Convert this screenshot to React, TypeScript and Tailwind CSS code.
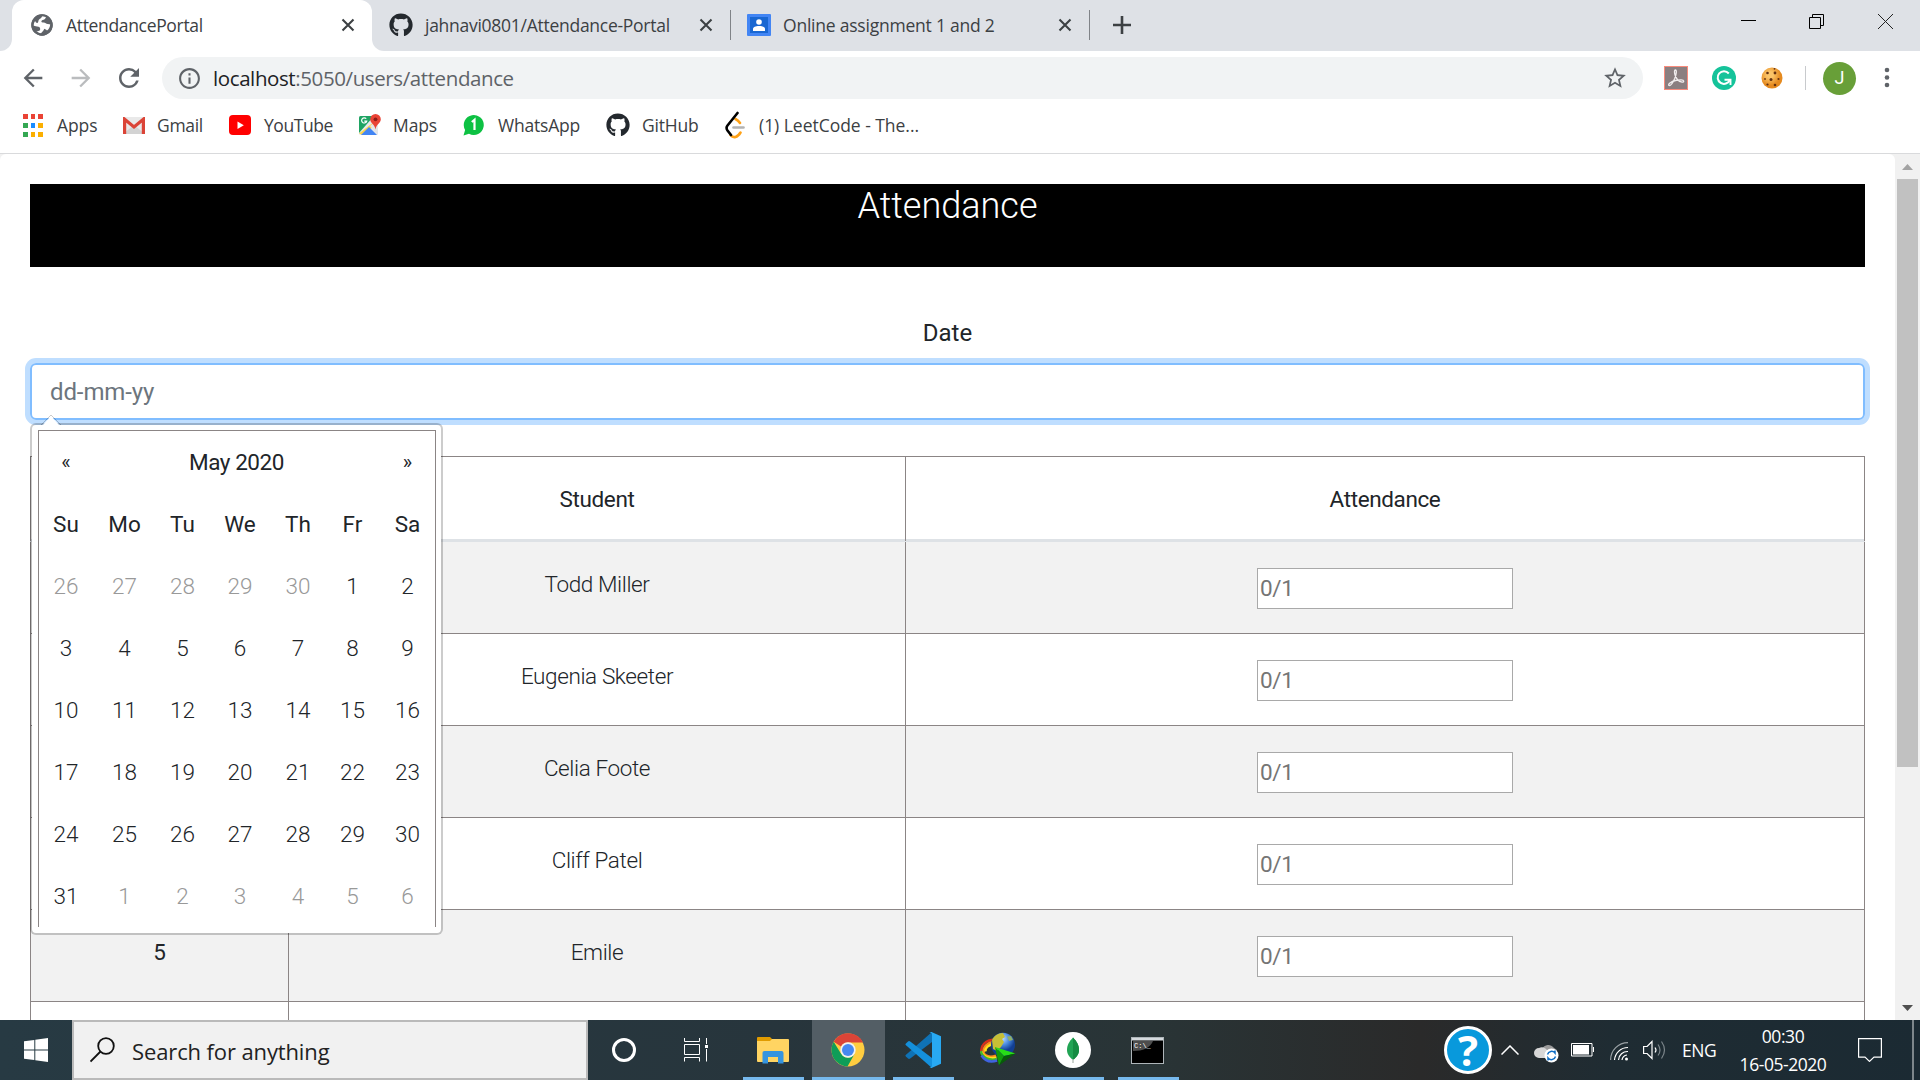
import React from "react";
import { FaGithub } from "react-icons/fa";
import { MdStarBorder, MdInfoOutline, MdArrowBack, MdArrowForward, MdRefresh } from "react-icons/md";

const UI = "font-['Open_Sans','Noto_Sans',sans-serif]";
const ROBOTO = "font-[Roboto,sans-serif]";

function Cross({ className = "" }: { className?: string }) {
  return (
    <svg width="14" height="14" viewBox="0 0 14 14" className={`shrink-0 ${className}`}>
      <path d="M1.5 1.5L12.5 12.5M12.5 1.5L1.5 12.5" stroke="#3c4043" strokeWidth="2.1" />
    </svg>
  );
}

function TabStrip() {
  return (
    <header className={`flex h-[51px] bg-[#dee1e6] text-[17.5px] text-[#3c4043] ${UI}`}>
      <div className="flex w-3 items-end bg-white">
        <span className="h-full w-3 rounded-br-[12px] bg-[#dee1e6]" />
      </div>
      <div className="h-full w-[360px] bg-[#dee1e6]">
        <div className="flex h-full items-center rounded-t-[12px] bg-white pb-px pl-[18px]">
          <svg width="24" height="24" viewBox="0 0 24 24" className="shrink-0">
            <circle cx="12" cy="12" r="10.700" fill="#5f6368" />
            <path
              d="M12 3.500c1.500-.4 3-.2 4.200.5-.8.600-.6 1.600-1.600 2.200-1.300.8-2.900.6-3.200 2-.2 1 .9 1.300 2.200 1.300 1.900 0 2.500 1.200 4 1.500 1 .2 1.600.1 2.600.5-.1 2.500-1.400 4.700-3.200 6.100-.4-1.100-1.600-1-2.800-1.800-.5 1.700-1.500 2.900-3.200 4.500-1.800-.3-3.300-1-4.600-2.200 1.900.2 3.600-.2 3.800-1.900.1-1.200-.4-2.200-1.800-2.500-1.900-.4-3.300-.5-4.800-1.300.1-1.700.6-3.200 1.500-4.500.5 1.200 1.200 2 2.200 2 1.400 0 .6-2.200 1.600-3.200.9-.9 2.300-1.200 3.100-3.200z"
              fill="#fff"
            />
            <circle cx="12" cy="12" r="9.800" fill="none" stroke="#5f6368" strokeWidth="1.800" />
          </svg>
          <span className="ml-3 w-[275px] whitespace-nowrap tracking-[-0.33px]">AttendancePortal</span>
          <Cross />
        </div>
      </div>
      <div className="bg-white">
        <div className="flex h-full items-center rounded-bl-[12px] bg-[#dee1e6] pb-px pl-[17px]">
          <FaGithub size={24} color="#24292e" className="shrink-0" />
          <span className="ml-3 w-[274px] whitespace-nowrap tracking-[-0.27px]">jahnavi0801/Attendance-Portal</span>
          <Cross />
          <span className="ml-[17px] h-[30px] w-px bg-[#808388]" />
          <svg width="24" height="22" viewBox="0 0 24 22" className="ml-4 shrink-0">
            <rect width="24" height="22" rx="1" fill="#4285f4" />
            <rect x="3" y="3" width="18" height="16" fill="#1967d2" />
            <circle cx="12" cy="8" r="2.8" fill="#fff" />
            <path d="M6 17v-2c0-2 2.500-3 6-3s6 1 6 3v2z" fill="#fff" />
          </svg>
          <span className="ml-3 w-[275px] whitespace-nowrap tracking-[-0.22px]">Online assignment 1 and 2</span>
          <Cross />
          <span className="ml-[17px] h-[30px] w-px bg-[#808388]" />
          <svg width="18" height="18" viewBox="0 0 18 18" className="ml-[23px]">
            <path d="M9 0v18M0 9h18" stroke="#3c4043" strokeWidth="2.600" />
          </svg>
        </div>
      </div>
      <div className="flex-1" />
      <div className="flex h-[43px] items-center pr-[27px]">
        <svg width="15" height="15" viewBox="0 0 15 15" className="mr-[53px]">
          <path d="M0 6.500h15" stroke="#000" />
        </svg>
        <svg width="15" height="15" viewBox="0 0 15 15" className="mr-[54px]" fill="none" stroke="#000">
          <path d="M0.500 3.500h11v11h-11zM3.500 3.500v-3h11v11h-3" />
        </svg>
        <svg width="15" height="15" viewBox="0 0 15 15">
          <path d="M0 0L15 15M15 0L0 15" stroke="#222" />
        </svg>
      </div>
    </header>
  );
}

function Toolbar() {
  return (
    <div className={`flex h-[54px] items-center pl-[19px] ${UI}`}>
      <MdArrowBack size={28} color="#5f6368" className="shrink-0" />
      <MdArrowForward size={28} color="#babcbe" className="ml-5 shrink-0" />
      <MdRefresh size={30} color="#5f6368" className="ml-[19px] shrink-0" />
      <div className="ml-[18px] flex h-[42px] w-[1481px] shrink-0 items-center rounded-full bg-[#f1f3f4] pl-[15px]">
        <MdInfoOutline size={25} color="#5f6368" className="shrink-0" />
        <span className="ml-[11px] w-[1389px] shrink-0 whitespace-nowrap text-[20.5px] tracking-[-0.4px] text-[#5f6368]">
          <span className="text-[#202124]">localhost</span>:5050/users/attendance
        </span>
        <MdStarBorder size={26} color="#5f6368" className="shrink-0" />
      </div>
      <svg width="24" height="24" viewBox="0 0 24 24" className="ml-[21px] shrink-0">
        <rect x="0.500" y="0.500" width="23" height="23" fill="#8b7f80" stroke="#f98b7c" />
        <path
          d="M11.300 4c1.800 0 1 4.500-.6 8.500-1.500 3.500-4 7.500-5.700 7-1.600-1 2-4 6.500-5s8-.8 8.200.7c0 1.800-4.200 1-6.700-2.200C11 10.500 9.500 4.500 11.300 4z"
          fill="none"
          stroke="#f1eded"
          strokeWidth="1.300"
        />
      </svg>
      <svg width="24" height="24" viewBox="0 0 24 24" className="ml-6 shrink-0">
        <circle cx="12" cy="12" r="12" fill="#15c39a" />
        <path d="M16.800 7.500A6.300 6.300 0 1 0 17.800 14" fill="none" stroke="#fff" strokeWidth="2" />
        <path d="M12.500 13.700h6v5.300" fill="none" stroke="#fff" strokeWidth="1.900" />
      </svg>
      <svg width="22" height="22" viewBox="0 0 22 22" className="ml-[25px] shrink-0">
        <defs>
          <radialGradient id="cookie" cx="40%" cy="35%">
            <stop offset="0.300" stopColor="#fbc468" />
            <stop offset="1" stopColor="#e58a1f" />
          </radialGradient>
        </defs>
        <circle cx="11" cy="11" r="10.500" fill="url(#cookie)" />
        <g fill="#633011">
          <circle cx="6.500" cy="6" r="1.300" />
          <circle cx="14" cy="6" r="1.400" />
          <circle cx="10" cy="12.500" r="1.500" />
          <circle cx="4" cy="12" r="0.900" />
          <circle cx="17.500" cy="12" r="1.100" />
          <circle cx="6.500" cy="17.500" r="1.100" />
          <circle cx="14" cy="18" r="1.300" />
          <circle cx="13.500" cy="1.800" r="0.900" />
        </g>
      </svg>
      <span className="ml-[22px] h-6 w-px shrink-0 bg-[#c8cacd]" />
      <span className="ml-[17px] flex size-[33px] shrink-0 items-center justify-center rounded-full bg-[#689f38] font-[Roboto,sans-serif] text-lg text-white">
        J
      </span>
      <svg width="6" height="22" viewBox="0 0 6 22" className="ml-7 shrink-0" fill="#5f6368">
        <circle cx="3" cy="3" r="2.300" />
        <circle cx="3" cy="10.500" r="2.300" />
        <circle cx="3" cy="18" r="2.300" />
      </svg>
    </div>
  );
}

const appColors = ["#ea4335", "#ea4335", "#ea4335", "#34a853", "#1a8cff", "#fbaf00", "#34a853", "#fbaf00", "#fbaf00"];

function Bookmarks() {
  return (
    <nav className={`flex h-[49px] items-center pb-[7px] pl-[23px] text-[17.5px] whitespace-nowrap text-[#3c4043] ${UI}`}>
      <div className="grid w-5 grid-cols-3 gap-x-[3px] gap-y-1">
        {appColors.map((c, i) => (
          <span key={i} className="h-[5px]" style={{ backgroundColor: c }} />
        ))}
      </div>
      <span className="ml-[14px] w-[66px] tracking-[-0.1px]">Apps</span>
      <svg width="22" height="17" viewBox="0 0 22 17">
        <rect width="22" height="17" rx="1.500" fill="#e9e9e9" />
        <path d="M0 17L11 8l11 9z" fill="#d3d3d3" />
        <path d="M1.600 17V2.200L11 10l9.400-7.800V17" fill="none" stroke="#db4437" strokeWidth="3.200" />
      </svg>
      <span className="ml-3 w-[72px] tracking-[-0.3px]">Gmail</span>
      <svg width="22" height="20" viewBox="0 0 22 20">
        <rect width="22" height="20" rx="4" fill="#f00" />
        <path d="M8.500 6.500v7.500l6.300-3.700z" fill="#fff" />
      </svg>
      <span className="ml-[13px] w-[95px] tracking-[-0.45px]">YouTube</span>
      <svg width="22" height="22" viewBox="0 0 22 22">
        <rect y="2" width="19" height="19" rx="1.500" fill="#e8eaed" />
        <path d="M0 3.500Q0 2 1.500 2H15L0 19z" fill="#1fa463" />
        <path d="M0 19.500L17.500 6l2 3L3 21z" fill="#fcd34d" />
        <path d="M2 21l8-8 8 8z" fill="#4285f4" />
        <path d="M11 12l3-2.500 5 5V21z" fill="#e3e5e8" />
        <path d="M7.200 4.700A2.600 2.600 0 1 0 7.700 7.200H5.300" fill="none" stroke="#fff" strokeWidth="1.200" />
        <path d="M16.500 0a5.300 5.300 0 0 1 5.300 5.300c0 4-4.300 4.700-5.300 10.200-1-5.500-5.300-6.200-5.300-10.200A5.300 5.300 0 0 1 16.500 0z" fill="#ea4335" />
        <circle cx="16.500" cy="5.300" r="1.900" fill="#8c1d18" />
      </svg>
      <span className="ml-3 w-[70px] tracking-[-0.1px]">Maps</span>
      <svg width="22" height="22" viewBox="0 0 22 22">
        <path d="M0.500 21.500l1.600-5.500A10 10 0 1 1 6 19.800z" fill="#0dc143" />
        <path d="M8.800 8l2.700-2.200V16" fill="none" stroke="#fff" strokeWidth="2.200" />
      </svg>
      <span className="ml-[13px] w-[108px] tracking-[-0.2px]">WhatsApp</span>
      <FaGithub size={24} color="#24292e" className="shrink-0" />
      <span className="ml-3 w-[83px] tracking-[-0.2px]">GitHub</span>
      <svg width="20" height="28" viewBox="0 0 20 28" fill="none" strokeLinecap="round">
        <path d="M10.500 8c2 1 3.600 2.600 4.500 4M15.500 21.500c-3 5-7 6-10 2.500" stroke="#ffa116" strokeWidth="2.600" />
        <path d="M12.500 2L2.500 14.500c-1.500 1.800-1 3.500 0 5L6 24" stroke="#000" strokeWidth="2.600" />
        <path d="M8.500 16.500h10" stroke="#b3b3b3" strokeWidth="2.600" />
      </svg>
      <span className="ml-[14px] tracking-[-0.03px]">(1) LeetCode - The...</span>
    </nav>
  );
}

const students = ["Todd Miller", "Eugenia Skeeter", "Celia Foote", "Cliff Patel", "Emile"];

function AttendanceTable() {
  const line = "border-[#8b8585]";
  const row = "grid grid-cols-[258px_617px_960px] text-center";
  return (
    <div className="mt-9 text-[22.5px] tracking-[-0.38px] text-[#212529]">
      <div className={`h-[86px] border-t border-b-[3px] border-t-[#8b8585] border-b-[#dee2e6] leading-[84px] ${row}`}>
        <div className={`border-l ${line}`} />
        <div className={`border-l ${line}`}>Student</div>
        <div className={`border-x ${line}`}>Attendance</div>
      </div>
      {students.map((name, i) => (
        <div key={name} className={`h-[92px] border-b border-[#8b8585] leading-[34px] even:bg-[#f2f2f2] ${row}`}>
          <div className={`border-l pt-[25px] ${line}`}>{i === 4 ? "5" : ""}</div>
          <div className={`border-l pt-[25px] font-light ${line}`}>{name}</div>
          <div className={`flex justify-center border-x pt-[26px] ${line}`}>
            <div className="h-[41px] w-64 border border-[#a9a9a9] bg-white pl-0.5 text-left leading-[39px] tracking-[-0.3px] text-[#757575]">
              0/1
            </div>
          </div>
        </div>
      ))}
      <div className={`h-[92px] ${row}`}>
        <div className={`border-l ${line}`} />
        <div className={`border-l ${line}`} />
        <div className={`border-x ${line}`} />
      </div>
    </div>
  );
}

const days = [
  26, 27, 28, 29, 30, 1, 2, 3, 4, 5, 6, 7, 8, 9, 10, 11, 12, 13, 14, 15, 16, 17, 18, 19, 20, 21, 22, 23, 24, 25, 26, 27,
  28, 29, 30, 31, 1, 2, 3, 4, 5, 6,
];

function DatePicker() {
  return (
    <div className="absolute top-[269px] left-[30px] h-[512px] w-[413px] rounded-[6px] border-2 border-black/20 bg-white bg-clip-padding p-[5px] pl-[6px] text-[22.5px] text-[#212529]">
      <svg width="20" height="11" viewBox="0 0 20 11" className="absolute -top-[10px] left-[9px]">
        <path d="M0 10L10 0l10 10" fill="none" stroke="#000" strokeOpacity="0.2" />
        <path d="M1 11L10 1l9 10z" fill="#fff" />
      </svg>
      <div className="grid auto-rows-[62px] grid-cols-[54px_63px_53px_62px_54px_55px_55px] border border-b-0 border-[#8b8585] text-center leading-[62px]">
        <span className="text-[20px]">«</span>
        <span className="col-span-5 tracking-[-0.45px]">May 2020</span>
        <span className="text-[20px]">»</span>
        {["Su", "Mo", "Tu", "We", "Th", "Fr", "Sa"].map((d) => (
          <span key={d}>{d}</span>
        ))}
        {days.map((d, i) => (
          <span key={i} className={i < 5 || i > 35 ? "font-light text-[#999999]" : "font-light"}>
            {d}
          </span>
        ))}
      </div>
    </div>
  );
}

function Page() {
  return (
    <div className="flex h-[867px] border-t border-[#d9dadc] bg-[#f1f1f1]">
      <main className={`relative h-[866px] w-[1895px] overflow-hidden rounded-t-[6px] bg-white px-[30px] pt-[30px] ${ROBOTO}`}>
        <h1 className="h-[83px] bg-black pt-px text-center text-[36px] leading-[43px] font-light text-white">Attendance</h1>
        <div className="mt-12 text-center text-2xl leading-9 text-[#212529]">Date</div>
        <div className="mt-3 flex h-[57px] items-center rounded-[6px] border-2 border-[#80bdff] pl-[18px] text-2xl tracking-[-0.1px] text-[#6c757d] ring-[5px] ring-[#bfdeff]">
          dd-mm-yy
        </div>
        <AttendanceTable />
        <DatePicker />
      </main>
      <div className="flex w-[25px] flex-col items-center bg-[#f1f1f1] pt-[10px]">
        <svg width="11" height="6" viewBox="0 0 11 6">
          <path d="M5.500 0L11 6H0z" fill="#a3a3a3" />
        </svg>
        <div className="mt-[9px] h-[588px] w-[21px] bg-[#c1c1c1]" />
        <svg width="11" height="6" viewBox="0 0 11 6" className="mt-auto mb-[9px]">
          <path d="M0 0h11L5.500 6z" fill="#505050" />
        </svg>
      </div>
    </div>
  );
}

function AppCell({ running, active, children }: { running?: boolean; active?: boolean; children: React.ReactNode }) {
  return (
    <div className={`flex h-[60px] w-[75px] shrink-0 flex-col items-center ${active ? "px-px" : "px-[7px]"}`}>
      <div className={`flex h-[57px] w-full items-center justify-center pt-[3px] pr-[2px] ${active ? "bg-[#535e65]" : ""}`}>{children}</div>
      <div className={`h-[3px] w-full ${running ? "bg-[#76b9ed]" : ""}`} />
    </div>
  );
}

function Taskbar() {
  return (
    <footer className={`flex h-[60px] bg-[linear-gradient(90deg,#273a43_0%,#27353c_40%,#293436_60%,#2a2a2a_74%,#1f2c33_84%,#1b2a33_100%)] ${UI}`}>
      <div className="flex w-[72px] shrink-0 items-center justify-center">
        <svg width="24" height="24" viewBox="0 0 24 24" fill="#fff">
          <path d="M0 3.300L10.300 1.900v9.600H0zM11.300 1.700L24 0v11.500H11.300zM0 12.500h10.300v9.600L0 20.700zM11.300 12.500H24V24l-12.700-1.700z" />
        </svg>
      </div>
      <div className="flex w-[516px] shrink-0 items-center border-2 border-[#bababa] bg-[#f1f1f1] pl-4">
        <svg width="26" height="26" viewBox="0 0 26 26" fill="none" stroke="#111" strokeWidth="1.800">
          <circle cx="16" cy="9" r="7.800" />
          <path d="M10.500 14.500L0.500 24.500" />
        </svg>
        <span className="ml-4 pt-0.5 text-[22px] tracking-[-0.12px] text-[#222]">Search for anything</span>
      </div>
      <div className="flex w-[72px] shrink-0 items-center justify-center">
        <span className="size-6 rounded-full border-[3.5px] border-white" />
      </div>
      <div className="mr-1 flex w-[72px] shrink-0 items-center justify-center">
        <svg width="24" height="24" viewBox="0 0 24 24" fill="none" stroke="#fff">
          <path d="M0.500 0v3.500h15V0M0.500 6.500h15v10h-15zM0.500 23.500v-4h15v4M22.500 0v6M22.500 11v12.500" />
          <rect x="21" y="7" width="3" height="3" fill="#fff" stroke="none" />
        </svg>
      </div>
      <AppCell running>
        <svg width="32" height="27" viewBox="0 0 32 27">
          <path d="M0 1q0-1 1-1h12l2 2v4H0z" fill="#e09b00" />
          <path d="M0 4h13l2-2h16q1 0 1 1v21q0 1-1 1H1q-1 0-1-1z" fill="#ffd462" />
          <path d="M5.500 26.500V16q0-2 2-2h17q2 0 2 2v10.500h-5.500V20H11v6.500z" fill="#3594df" />
        </svg>
      </AppCell>
      <AppCell running active>
        <svg width="34" height="34" viewBox="0 0 34 34">
          <circle cx="17" cy="17" r="16.500" fill="#ffcd40" />
          <path d="M2.700 8.700A16.500 16.500 0 0 1 32 9.500H17a8 8 0 0 0-7 4z" fill="#db4437" />
          <path d="M2.700 8.700A16.500 16.500 0 0 0 16.500 33.500l7-12.500a8 8 0 0 1-13.600-.5z" fill="#0f9d58" />
          <circle cx="17" cy="17" r="7.700" fill="#f1f1f1" />
          <circle cx="17" cy="17" r="6" fill="#4688f1" />
        </svg>
      </AppCell>
      <AppCell running>
        <svg width="36" height="36" viewBox="0 0 36 36">
          <path d="M0.700 24.300L3 26.500q1 .8 2.200 0L27 10V0L.7 23q-.6.700 0 1.300z" fill="#0f72b5" />
          <path d="M0.700 11.700L3 9.500q1-.8 2.200 0L27 26v10L.7 13q-.6-.7 0-1.300z" fill="#1490dc" />
          <path d="M26.500 0L36 4.200v27.600L26.500 36q-1 .1-2-1 2.500 1 2.500-1.500v-31Q27 0 24.500 1q1-1.100 2-1z" fill="#28a9f2" />
        </svg>
      </AppCell>
      <AppCell>
        <svg width="36" height="36" viewBox="0 0 36 36">
          <defs>
            <radialGradient id="earth" cx="50%" cy="25%">
              <stop offset="0" stopColor="#b9d9ff" />
              <stop offset="0.500" stopColor="#4c8ce0" />
              <stop offset="1" stopColor="#123f94" />
            </radialGradient>
          </defs>
          <g fill="none" strokeWidth="2.400">
            <path d="M15 7.500C5 8 0 14 1.500 20.500" stroke="#d7301c" />
            <path d="M15 9.700C7 10.500 3 15 3.500 20.500 4.500 24 10 26 16 23.500" stroke="#ff8a1c" />
            <path d="M15 11.700C8 12.500 5 16 5.500 19.500" stroke="#ffe11b" />
            <path d="M1.500 19.500C3 25 10 27.500 16.500 25.500" stroke="#ffe11b" />
            <path d="M0.800 19C2 26 10 29 17 27" stroke="#43b52e" />
            <path d="M1.500 23.500C5 29 11 30.500 17 28.500" stroke="#3f63e0" />
          </g>
          <circle cx="23" cy="12.700" r="12" fill="url(#earth)" />
          <path d="M12 8c2-4 6-7 11-7l2 4-3 2 2 3-3 5-4 4-4-2z" fill="#c7bf36" />
          <path d="M27 4.500l4-.5 2 4-4 1z" fill="#8fae6c" />
          <path d="M15 15l20.500 6.500L24 24z" fill="#27dd17" />
          <path d="M15 15l9 9-5 9.500z" fill="#10990a" />
          <path d="M24 24l11.500-2.500L19 33.500z" fill="#075c09" />
        </svg>
      </AppCell>
      <AppCell running>
        <svg width="36" height="36" viewBox="0 0 36 36">
          <circle cx="18" cy="18" r="18" fill="#fff" />
          <path d="M18 5.500c3.500 4 6 7 6 12.500 0 4-2.500 7.500-6 9.800-3.500-2.300-6-5.800-6-9.800 0-5.500 2.500-8.500 6-12.500z" fill="#21a454" />
          <path d="M18 5.500c3.500 4 6 7 6 12.500 0 4-2.500 7.500-6 9.800z" fill="#168c43" />
          <path d="M18 27v4" stroke="#aab5ae" strokeWidth="1.200" />
        </svg>
      </AppCell>
      <AppCell running>
        <svg width="33" height="27" viewBox="0 0 33 27">
          <rect x="0.500" y="0.500" width="32" height="26" fill="#000" stroke="#aeb5b9" />
          <path d="M1 1h31v2.500H1z" fill="#d5dade" />
          <path d="M2 14C12 14 19 11 22 4H2z" fill="#4d4d4d" />
          <text x="3" y="10.500" fill="#fff" fontSize="7" fontFamily="Liberation Mono, monospace">C:\_</text>
        </svg>
      </AppCell>
      <div className="flex-1" />
      <div className="mt-1.5 flex size-12 shrink-0 items-center justify-center rounded-full border-[3px] border-white bg-[#0899dc] text-[42px] leading-none font-bold text-white">
        ?
      </div>
      <div className="flex w-[428px] shrink-0 items-center pl-[9px]">
        <svg width="18" height="10" viewBox="0 0 18 10" fill="none" stroke="#fff" strokeWidth="1.500">
          <path d="M0.500 9.500L9 1l8.500 8.500" />
        </svg>
        <svg width="25" height="21" viewBox="0 0 25 21" className="mt-1 ml-[15px]">
          <path d="M8 7a7 7 0 0 1 12-1 5 5 0 0 1 1 9H8z" fill="#9b9b9b" />
          <path d="M5 16a5 5 0 0 1 0-10 6 6 0 0 1 8 2l5 8z" fill="#d7d7d7" />
          <circle cx="17.500" cy="13.500" r="7" fill="#fff" />
          <path d="M13.500 12.500a4.300 4.300 0 0 1 7.500-1.500v-2.500M21.500 14.500a4.300 4.300 0 0 1-7.500 1.500v2.500" fill="none" stroke="#0f6fc6" strokeWidth="1.500" />
        </svg>
        <svg width="23" height="14" viewBox="0 0 23 14" className="ml-3" fill="none" stroke="#fff">
          <path d="M0.500 0.500h20.500v12.500h-20.500zM22.500 4v5" />
          <rect x="2" y="2" width="16" height="9.500" fill="#fff" stroke="none" />
        </svg>
        <svg width="19" height="19" viewBox="0 0 19 19" className="mt-0.5 ml-4" fill="none" stroke="#fff" strokeWidth="1.200">
          <path d="M0.600 18A17.400 17.400 0 0 1 18 0.600" stroke="#9aa1a5" />
          <path d="M4.500 18A13.500 13.500 0 0 1 18 5.500M8.500 18A9 9 0 0 1 18 9.500M12 18a6 6 0 0 1 5-5" />
          <circle cx="16.500" cy="17" r="1.500" fill="#fff" stroke="none" />
        </svg>
        <svg width="23" height="20" viewBox="0 0 23 20" className="ml-[14px]" fill="none" stroke="#fff" strokeWidth="1.200">
          <path d="M0.600 6.500h3.500L9 1.500v17l-4.900-5H.6zM12 7.500q2 2.500 0 5" />
          <path d="M15 4.500q4 5.500 0 11M18.500 1.500q6 8.500 0 17" stroke="#7c868b" />
        </svg>
        <span className="ml-4 w-[33px] text-[17.5px] tracking-[-0.5px] text-white">ENG</span>
        <div className="ml-[21px] w-[94px] text-center text-[17.500px] leading-[28px] tracking-[-0.45px] whitespace-nowrap text-white">
          <div>00:30</div>
          <div>16-05-2020</div>
        </div>
        <svg width="24" height="24" viewBox="0 0 24 24" className="ml-7" fill="none" stroke="#fff" strokeWidth="1.200">
          <path d="M0.600 0.600h22.800v18.500h-7.400l-4.500 4.300L7 19.100H.6z" />
        </svg>
        <span className="ml-[30px] h-[60px] w-0.5 bg-[#7d868b]" />
      </div>
    </footer>
  );
}

export default function App() {
  return (
    <div className="h-[1080px] w-[1920px] overflow-hidden bg-white">
      <TabStrip />
      <Toolbar />
      <div className="-mt-px">
        <Bookmarks />
      </div>
      <Page />
      <Taskbar />
    </div>
  );
}
